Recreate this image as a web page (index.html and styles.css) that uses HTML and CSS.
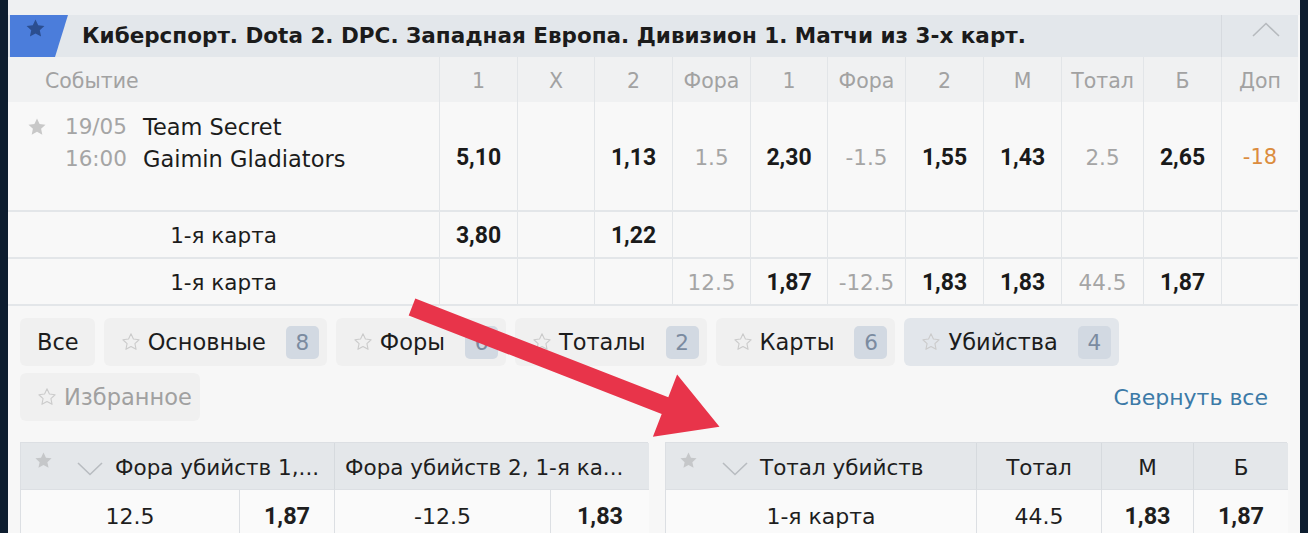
FILE: index.html
```html
<!DOCTYPE html>
<html lang="ru">
<head>
<meta charset="utf-8">
<title>Dota 2 DPC</title>
<link rel="stylesheet" href="styles.css">
</head>
<body>
<div class="page">
  <div class="top-strip"></div>

  <div class="league">
    <div class="league-flag">
      <svg class="flag-star" viewBox="0 0 24 24"><path d="M12 1.8l3.1 6.6 7.1.8-5.3 4.9 1.5 7.1L12 17.6l-6.4 3.6 1.5-7.1L1.8 9.2l7.1-.8z"/></svg>
    </div>
    <div class="league-title">Киберспорт. Dota 2. DPC. Западная Европа. Дивизион 1. Матчи из 3-х карт.</div>
    <div class="league-toggle">
      <svg width="28" height="15" viewBox="0 0 28 15"><polyline points="1,14 14,1.5 27,14" fill="none" stroke="#b6babe" stroke-width="1.6"/></svg>
    </div>
  </div>

  <div class="row head-row">
    <div class="cell event-head">Событие</div>
    <div class="cell">1</div>
    <div class="cell">X</div>
    <div class="cell">2</div>
    <div class="cell">Фора</div>
    <div class="cell">1</div>
    <div class="cell">Фора</div>
    <div class="cell">2</div>
    <div class="cell">М</div>
    <div class="cell">Тотал</div>
    <div class="cell">Б</div>
    <div class="cell">Доп</div>
  </div>

  <div class="row main-row">
    <div class="cell event">
      <svg class="fav-star" viewBox="0 0 24 24"><path d="M12 1.8l3.1 6.6 7.1.8-5.3 4.9 1.5 7.1L12 17.6l-6.4 3.6 1.5-7.1L1.8 9.2l7.1-.8z"/></svg>
      <div class="times"><span>19/05</span><span>16:00</span></div>
      <div class="teams"><span>Team Secret</span><span>Gaimin Gladiators</span></div>
    </div>
    <div class="cell odd">5,10</div>
    <div class="cell"></div>
    <div class="cell odd">1,13</div>
    <div class="cell param">1.5</div>
    <div class="cell odd">2,30</div>
    <div class="cell param">-1.5</div>
    <div class="cell odd">1,55</div>
    <div class="cell odd">1,43</div>
    <div class="cell param">2.5</div>
    <div class="cell odd">2,65</div>
    <div class="cell extra">-18</div>
  </div>

  <div class="row sub-row">
    <div class="cell sub-name">1-я карта</div>
    <div class="cell odd">3,80</div>
    <div class="cell"></div>
    <div class="cell odd">1,22</div>
    <div class="cell"></div>
    <div class="cell"></div>
    <div class="cell"></div>
    <div class="cell"></div>
    <div class="cell"></div>
    <div class="cell"></div>
    <div class="cell"></div>
    <div class="cell"></div>
  </div>

  <div class="row sub-row">
    <div class="cell sub-name">1-я карта</div>
    <div class="cell"></div>
    <div class="cell"></div>
    <div class="cell"></div>
    <div class="cell param">12.5</div>
    <div class="cell odd">1,87</div>
    <div class="cell param">-12.5</div>
    <div class="cell odd">1,83</div>
    <div class="cell odd">1,83</div>
    <div class="cell param">44.5</div>
    <div class="cell odd">1,87</div>
    <div class="cell"></div>
  </div>

  <div class="filters">
    <div class="tab tab-plain">Все</div>
    <div class="tab">
      <svg class="tab-star" viewBox="0 0 24 24"><path d="M12 2.2l2.9 6.3 6.8.8-5 4.7 1.4 6.8L12 17.4l-6.1 3.4 1.4-6.8-5-4.7 6.8-.8z"/></svg>
      <span class="tab-label">Основные</span><span class="badge">8</span>
    </div>
    <div class="tab">
      <svg class="tab-star" viewBox="0 0 24 24"><path d="M12 2.2l2.9 6.3 6.8.8-5 4.7 1.4 6.8L12 17.4l-6.1 3.4 1.4-6.8-5-4.7 6.8-.8z"/></svg>
      <span class="tab-label">Форы</span><span class="badge">6</span>
    </div>
    <div class="tab">
      <svg class="tab-star" viewBox="0 0 24 24"><path d="M12 2.2l2.9 6.3 6.8.8-5 4.7 1.4 6.8L12 17.4l-6.1 3.4 1.4-6.8-5-4.7 6.8-.8z"/></svg>
      <span class="tab-label">Тоталы</span><span class="badge">2</span>
    </div>
    <div class="tab">
      <svg class="tab-star" viewBox="0 0 24 24"><path d="M12 2.2l2.9 6.3 6.8.8-5 4.7 1.4 6.8L12 17.4l-6.1 3.4 1.4-6.8-5-4.7 6.8-.8z"/></svg>
      <span class="tab-label">Карты</span><span class="badge">6</span>
    </div>
    <div class="tab tab-active">
      <svg class="tab-star" viewBox="0 0 24 24"><path d="M12 2.2l2.9 6.3 6.8.8-5 4.7 1.4 6.8L12 17.4l-6.1 3.4 1.4-6.8-5-4.7 6.8-.8z"/></svg>
      <span class="tab-label">Убийства</span><span class="badge">4</span>
    </div>
    <div class="tab tab-disabled">
      <svg class="tab-star" viewBox="0 0 24 24"><path d="M12 2.2l2.9 6.3 6.8.8-5 4.7 1.4 6.8L12 17.4l-6.1 3.4 1.4-6.8-5-4.7 6.8-.8z"/></svg>
      <span class="tab-label">Избранное</span>
    </div>
    <a class="collapse-all">Свернуть все</a>
  </div>

  <div class="markets">
    <div class="market market-left">
      <div class="mh mh-first span2">
        <svg class="mh-star" viewBox="0 0 24 24"><path d="M12 1.8l3.1 6.6 7.1.8-5.3 4.9 1.5 7.1L12 17.6l-6.4 3.6 1.5-7.1L1.8 9.2l7.1-.8z"/></svg>
        <svg class="mh-chev" width="26" height="14" viewBox="0 0 26 14"><polyline points="1,1 13,12.5 25,1" fill="none" stroke="#b8bcc0" stroke-width="1.6"/></svg>
        <span>Фора убийств 1,...</span>
      </div>
      <div class="mh mh-text span2">Фора убийств 2, 1-я ка...</div>
      <div class="mc">12.5</div>
      <div class="mc bold">1,87</div>
      <div class="mc">-12.5</div>
      <div class="mc bold">1,83</div>
    </div>
    <div class="market market-right">
      <div class="mh mh-first">
        <svg class="mh-star" viewBox="0 0 24 24"><path d="M12 1.8l3.1 6.6 7.1.8-5.3 4.9 1.5 7.1L12 17.6l-6.4 3.6 1.5-7.1L1.8 9.2l7.1-.8z"/></svg>
        <svg class="mh-chev" width="26" height="14" viewBox="0 0 26 14"><polyline points="1,1 13,12.5 25,1" fill="none" stroke="#b8bcc0" stroke-width="1.6"/></svg>
        <span>Тотал убийств</span>
      </div>
      <div class="mh mh-center">Тотал</div>
      <div class="mh mh-center">М</div>
      <div class="mh mh-center">Б</div>
      <div class="mc">1-я карта</div>
      <div class="mc">44.5</div>
      <div class="mc bold">1,83</div>
      <div class="mc bold">1,87</div>
    </div>
  </div>

  <svg class="arrow" width="1292" height="533" viewBox="8 0 1292 533">
    <polygon points="415.3,298.6 668.3,397.2 677.1,374.5 719.5,426.8 652.9,436.7 661.7,414.0 408.7,315.4" fill="#e8344a"/>
  </svg>
</div>
</body>
</html>
```

FILE: styles.css
```css
* { box-sizing: border-box; }

html, body {
  margin: 0;
  padding: 0;
}

body {
  background: #0d1d2f;
  font-family: "DejaVu Sans", Roboto, "Noto Sans", sans-serif;
  font-size: 21.5px;
  color: #1c1c1c;
}

.page {
  position: relative;
  margin: 0 8px;
  width: 1292px;
  height: 533px;
  overflow: hidden;
  background: #f7f7f7;
}

.top-strip {
  height: 15px;
  background: #eef0f2;
}

/* League header */
.league {
  display: flex;
  align-items: center;
  width: 1290px;
  height: 42px;
  background: #e3e7eb;
}

.league-flag {
  width: 58px;
  height: 42px;
  margin-left: 2px;
  background: #4b7ddb;
  clip-path: polygon(0 0, 58px 0, 45px 100%, 0 100%);
  display: flex;
  justify-content: flex-start;
  align-items: flex-start;
  padding: 3px 0 0 15px;
}

.flag-star {
  width: 21px;
  height: 21px;
  fill: #2b4e90;
}

.league-title {
  flex: 1;
  margin-left: 14px;
  font-weight: 700;
  font-size: 21.5px;
  color: #1b1b1b;
  white-space: nowrap;
  padding-bottom: 2px;
}

.league-toggle {
  width: 77px;
  height: 42px;
  border-left: 1px solid #d6dadf;
  display: flex;
  justify-content: center;
  align-items: flex-start;
  padding-top: 7px;
  padding-left: 12px;
}

/* Table rows */
.row {
  display: grid;
  grid-template-columns: 431px 78px 77px 78px 78px 77px 78px 78px 78px 82px 78px 77px;
  width: 1290px;
}

.cell {
  display: flex;
  align-items: center;
  justify-content: center;
  border-left: 1px solid #e2e5e8;
  white-space: nowrap;
}

.cell:first-child {
  border-left: none;
}

.head-row {
  height: 45px;
  background: #f0f1f2;
  color: #a2a2a2;
  font-size: 20.5px;
}

.head-row .cell {
  padding-top: 3px;
}

.event-head {
  justify-content: flex-start;
  padding-left: 37px;
}

.main-row {
  height: 110px;
  background: #f8f8f8;
  border-bottom: 2px solid #e3e6e9;
}

.sub-row {
  height: 47px;
  background: #f8f8f8;
  border-bottom: 2px solid #e3e6e9;
}

.event {
  justify-content: flex-start;
  align-items: flex-start;
  padding: 9px 0 0 19px;
}

.fav-star {
  width: 20px;
  height: 20px;
  fill: #c8c8c8;
  margin-top: 6px;
}

.times {
  display: flex;
  flex-direction: column;
  margin-left: 18px;
  color: #a5a5a5;
  line-height: 32px;
}

.teams {
  display: flex;
  flex-direction: column;
  margin-left: 16px;
  color: #1c1c1c;
  font-size: 22.5px;
  line-height: 32px;
}

.odd {
  font-family: Roboto, "DejaVu Sans", sans-serif;
  font-weight: 700;
  font-size: 23px;
  color: #1a1a1a;
  padding-top: 2px;
}

.param {
  color: #a5a5a5;
  padding-top: 2px;
}

.extra {
  color: #db8c3e;
  font-size: 21px;
  padding-top: 2px;
}

.sub-name {
  color: #1c1c1c;
  padding-top: 2px;
}

/* Filters */
.filters {
  display: flex;
  flex-wrap: wrap;
  align-items: center;
  gap: 7px 9px;
  padding: 12px 32px 0 12px;
}

.tab {
  display: flex;
  align-items: center;
  height: 48px;
  padding: 0 8px 0 17px;
  background: #f0f0f0;
  border-radius: 6px;
  color: #1c1c1c;
  font-size: 22.5px;
}

.tab-plain {
  padding: 0 16px 0 17px;
}

.tab-active {
  background: #e2e6eb;
}

.tab-disabled {
  color: #a0a0a0;
  padding-right: 8px;
}

.tab-star {
  width: 20px;
  height: 20px;
  fill: none;
  stroke: #cbcbcb;
  stroke-width: 1.3;
  stroke-linejoin: round;
}

.tab-label {
  margin-left: 7px;
}

.badge {
  display: flex;
  align-items: center;
  justify-content: center;
  width: 33px;
  height: 33px;
  margin-left: 20px;
  border-radius: 5px;
  background: #d2d9e2;
  color: #7b8ba0;
  font-size: 21.5px;
}

.collapse-all {
  margin-left: auto;
  color: #3c7aa7;
  font-size: 22px;
  text-decoration: none;
}

/* Markets */
.markets {
  display: grid;
  grid-template-columns: 628px 622px;
  gap: 17px;
  padding: 21px 0 0 12px;
}

.market {
  display: grid;
  border: 1px solid #dcdfe3;
  border-bottom: none;
}

.market-left {
  grid-template-columns: 218px 95px 216px 99px;
}

.market-right {
  grid-template-columns: 310px 125px 92px 95px;
}

.span2 {
  grid-column: span 2;
}

.mh {
  display: flex;
  align-items: center;
  height: 47px;
  padding-top: 3px;
  background: #e4e7ea;
  border-left: 1px solid #d6dade;
  border-bottom: 1px solid #dcdfe3;
  color: #1e1e1e;
  white-space: nowrap;
}

.mh-first {
  border-left: none;
  padding-left: 13px;
}

.mh-text {
  padding-left: 10px;
}

.mh-center {
  justify-content: center;
}

.mh-star {
  width: 19px;
  height: 19px;
  fill: #c5c7c9;
  align-self: flex-start;
  margin-top: 5px;
}

.mh-chev {
  margin-left: 24px;
  margin-top: 2px;
}

.mh-first span {
  margin-left: 12px;
}

.mc {
  display: flex;
  align-items: center;
  justify-content: center;
  height: 50px;
  padding-top: 2px;
  background: #fafafa;
  border-left: 1px solid #dcdfe3;
  color: #1e1e1e;
  font-size: 22px;
}

.market-left .mc:nth-child(3),
.market-right .mc:nth-child(5) {
  border-left: none;
}

.mc.bold {
  font-family: Roboto, "DejaVu Sans", sans-serif;
  font-weight: 700;
  font-size: 23.5px;
}

/* Annotation arrow overlay */
.arrow {
  position: absolute;
  left: 0;
  top: 0;
  pointer-events: none;
}
```
